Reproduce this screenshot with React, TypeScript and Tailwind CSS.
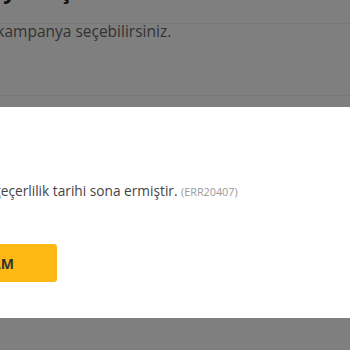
export default function App() {
  return (
    <div className="relative h-[350px] w-[350px] overflow-hidden bg-white font-['Open_Sans',sans-serif]">
      {/* Page behind the overlay */}
      <div className="-mt-[24px]">
        <h2 className="-ml-[88px] text-[22px] font-bold leading-[28px] text-[#222]">Kampanya Seçin</h2>
        <div className="mt-[19px] border-t border-[#f0f0f0]">
          <p className="-ml-[28px] -mt-[5px] text-[15.5px] leading-[24px] text-[#666]">Bir kampanya seçebilirsiniz.</p>
        </div>
        <div className="mt-[52px] border-t border-[#eee]" />
      </div>

      <div className="absolute inset-0 bg-black/50" />

      {/* Modal */}
      <div className="absolute left-0 right-0 top-[107px] h-[211px] bg-white">
        <div className="-ml-[83px] pt-[74px]">
          <p className="-ml-[15px] whitespace-nowrap text-[13.7px] leading-[20px] text-[#444]">
            Kampanyanın geçerlilik tarihi sona ermiştir. <span className="text-[10.8px] text-[#9a9a9a]">(ERR20407)</span>
          </p>
          <button className="mt-[42px] flex h-[38px] w-[140px] items-center justify-center rounded-[3px] bg-[#fdb813] text-[14px] font-bold text-[#333]">
            TAMAM
          </button>
        </div>
      </div>
    </div>
  );
}
